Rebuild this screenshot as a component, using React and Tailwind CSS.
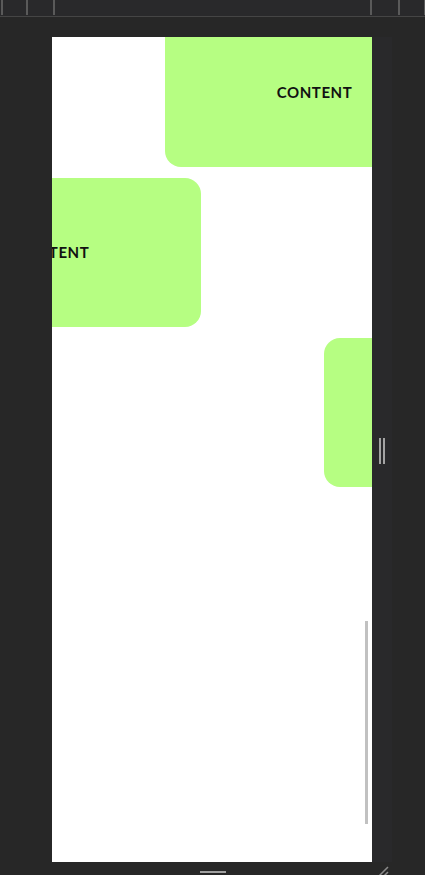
const cards = [
  { id: 1, offset: 'ml-[113px]' },
  { id: 2, offset: '-ml-[150px]' },
  { id: 3, offset: 'ml-[272px]' },
];

function Card({ offset }) {
  return (
    <div
      className={`${offset} flex h-[149px] w-[299px] shrink-0 items-center justify-center rounded-2xl bg-[#b6fe82]`}
    >
      <span className="font-['Lato',sans-serif] text-[15px] font-bold tracking-[0.04em] text-[#111]">
        CONTENT
      </span>
    </div>
  );
}

export default function App() {
  return (
    <div className="flex h-[875px] w-[425px] flex-col overflow-hidden bg-[#272727]">
      {/* toolbar */}
      <div className="flex h-[17px] shrink-0 border-b border-[#454545] bg-[#29292b]">
        <div className="ml-px h-[15px] w-[2px] bg-[#5a5a5a]" />
        <div className="ml-[23px] h-[15px] w-[2px] bg-[#5a5a5a]" />
        <div className="ml-[25px] h-[15px] w-[2px] bg-[#5a5a5a]" />
        <div className="ml-auto h-[15px] w-[2px] bg-[#5a5a5a]" />
        <div className="ml-[26px] h-[15px] w-[2px] bg-[#5a5a5a]" />
        <div className="ml-[24px] h-[15px] w-px bg-[#5a5a5a]" />
      </div>

      <div className="flex flex-1 pt-[20px]">
        {/* device frame */}
        <div className="relative ml-[52px] flex h-[825px] w-[320px] flex-col overflow-hidden bg-white">
          <div className="-mt-[19px] flex flex-col gap-[11px]">
            {cards.map((c) => (
              <Card key={c.id} offset={c.offset} />
            ))}
          </div>
          <div className="absolute right-[4px] top-[584px] h-[203px] w-[3px] bg-[#c1c1c1]" />
        </div>

        {/* side strip with handle */}
        <div className="flex w-[20px] flex-col items-center bg-[#29292b] pt-[401px]">
          <div className="flex gap-[2px]">
            <div className="h-[26px] w-[2px] bg-[#a3a3a3]" />
            <div className="h-[26px] w-[2px] bg-[#a3a3a3]" />
          </div>
        </div>
      </div>

      {/* bottom bar */}
      <div className="relative h-[13px] shrink-0">
        <div className="ml-[200px] mt-[9px] h-[2px] w-[26px] bg-[#a0a0a0]" />
        <svg
          className="absolute left-[376px] top-[3px]"
          width="14"
          height="12"
          viewBox="0 0 14 12"
        >
          <path d="M2 12 L12 2 M7 12 L12 7" stroke="#8a8a8a" strokeWidth="1.5" />
        </svg>
      </div>
    </div>
  );
}
